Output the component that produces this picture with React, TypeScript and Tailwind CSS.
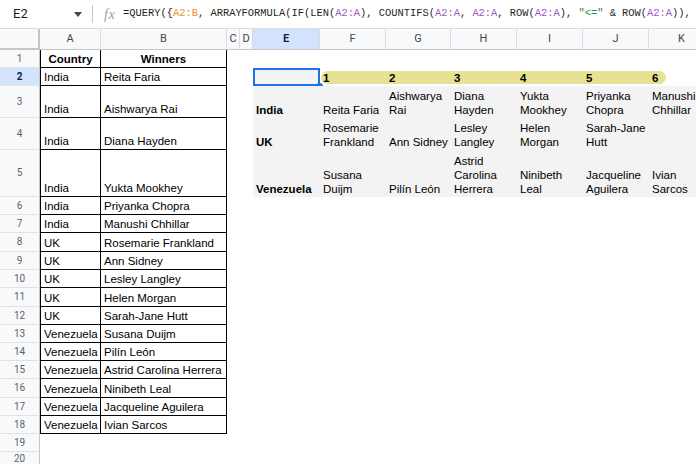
import React from 'react';

// Column widths of the sheet (row header first, then A..K)
const COLS = [
  { key: 'A', w: 'w-[61px]' },
  { key: 'B', w: 'w-[126px]' },
  { key: 'C', w: 'w-[13px]' },
  { key: 'D', w: 'w-[13px]' },
  { key: 'E', w: 'w-[67px]' },
  { key: 'F', w: 'w-[66px]' },
  { key: 'G', w: 'w-[65px]' },
  { key: 'H', w: 'w-[66px]' },
  { key: 'I', w: 'w-[66px]' },
  { key: 'J', w: 'w-[66px]' },
  { key: 'K', w: 'w-[66px]' },
];

const ROW_H = [
  'h-[18px]', 'h-[18px]', 'h-[32px]', 'h-[32px]', 'h-[47px]',
  'h-[18px]', 'h-[18px]', 'h-[19px]', 'h-[18px]', 'h-[18px]', 'h-[19px]', 'h-[18px]',
  'h-[18px]', 'h-[18px]', 'h-[18px]', 'h-[19px]', 'h-[18px]', 'h-[18px]',
  'h-[18px]', 'h-[14px]',
];

const TABLE: [string, string][] = [
  ['India', 'Reita Faria'],
  ['India', 'Aishwarya Rai'],
  ['India', 'Diana Hayden'],
  ['India', 'Yukta Mookhey'],
  ['India', 'Priyanka Chopra'],
  ['India', 'Manushi Chhillar'],
  ['UK', 'Rosemarie Frankland'],
  ['UK', 'Ann Sidney'],
  ['UK', 'Lesley Langley'],
  ['UK', 'Helen Morgan'],
  ['UK', 'Sarah-Jane Hutt'],
  ['Venezuela', 'Susana Duijm'],
  ['Venezuela', 'Pilín León'],
  ['Venezuela', 'Astrid Carolina Herrera'],
  ['Venezuela', 'Ninibeth Leal'],
  ['Venezuela', 'Jacqueline Aguilera'],
  ['Venezuela', 'Ivian Sarcos'],
];

// QUERY output, rows 3-5 (E..K), already wrapped the way the sheet wraps them
const RESULT: { country: string; cells: string[][] }[] = [
  {
    country: 'India',
    cells: [['Reita Faria'], ['Aishwarya', 'Rai'], ['Diana', 'Hayden'], ['Yukta', 'Mookhey'], ['Priyanka', 'Chopra'], ['Manushi', 'Chhillar']],
  },
  {
    country: 'UK',
    cells: [['Rosemarie', 'Frankland'], ['Ann Sidney'], ['Lesley', 'Langley'], ['Helen', 'Morgan'], ['Sarah-Jane', 'Hutt'], []],
  },
  {
    country: 'Venezuela',
    cells: [['Susana', 'Duijm'], ['Pilín León'], ['Astrid', 'Carolina', 'Herrera'], ['Ninibeth', 'Leal'], ['Jacqueline', 'Aguilera'], ['Ivian', 'Sarcos']],
  },
];

function Cell({
  w,
  lines = [],
  bold,
  center,
  className = '',
  children,
}: {
  w: string;
  lines?: string[];
  bold?: boolean;
  center?: boolean;
  className?: string;
  children?: React.ReactNode;
}) {
  return (
    <div
      className={`${w} h-full shrink-0 flex flex-col justify-end overflow-visible pb-[1px] px-[3px] leading-[14px] whitespace-nowrap ${
        bold ? 'font-bold' : ''
      } ${center ? 'items-center' : ''} ${className}`}
    >
      {lines.map((l, i) => (
        <div key={i}>{l}</div>
      ))}
      {children}
    </div>
  );
}

function RowHeader({ n, selected }: { n: number; selected?: boolean }) {
  return (
    <div
      className={`w-[40px] h-full shrink-0 flex items-center justify-center border-r border-b border-r-[#c4c7c5] border-b-[#e1e3e1] text-[10px] leading-none font-['Roboto',sans-serif] ${
        selected ? 'bg-[#d3e3fd] text-[#041e49] font-bold' : 'bg-[#f8f9fa] text-[#5f6368]'
      }`}
    >
      {n}
    </div>
  );
}

function FormulaBar() {
  const A = 'text-[#9a58c2]';
  return (
    <div className="h-[29px] flex items-center border-b border-[#dadce0] bg-white">
      <div className="w-[92px] flex items-center justify-between pl-[13px] pr-[10px] text-[13px] text-[#1f1f1f] font-['Roboto',sans-serif]">
        <span>E2</span>
        <svg width="8" height="5" viewBox="0 0 8 5">
          <path d="M0 0h8L4 5z" fill="#444746" />
        </svg>
      </div>
      <div className="w-px h-[18px] bg-[#c7c7c7]" />
      <span className="ml-[11px] text-[14px] italic text-[#9aa0a6] font-['Liberation_Serif',serif] tracking-[0.5px]">fx</span>
      <div className="ml-[8px] whitespace-nowrap text-[10.4px] text-[#1f1f1f] font-['Liberation_Mono',monospace]">
        =QUERY({'{'}
        <span className="text-[#e8912d]">A2:B</span>, ARRAYFORMULA(IF(LEN(<span className={A}>A2:A</span>), COUNTIFS(
        <span className={A}>A2:A</span>, <span className={A}>A2:A</span>, ROW(<span className={A}>A2:A</span>),{' '}
        <span className="text-[#1e8e3e]">"&lt;="</span> &amp; ROW(<span className={A}>A2:A</span>)),
      </div>
    </div>
  );
}

function ColumnHeaders() {
  return (
    <div className="h-[21px] flex bg-[#f8f9fa] font-['Roboto',sans-serif] text-[11px]">
      <div className="w-[40px] shrink-0 border-r-2 border-b-2 border-[#c4c7c5]" />
      {COLS.map((c) => (
        <div
          key={c.key}
          className={`${c.w} shrink-0 flex items-center justify-center border-r border-b border-r-[#dadce0] border-b-[#c4c7c5] ${
            c.key === 'E' ? 'bg-[#d3e3fd] text-[#041e49] font-semibold' : 'text-[#444746]'
          }`}
        >
          {c.key}
        </div>
      ))}
    </div>
  );
}

export default function App() {
  const tA = 'border-l border-r border-b border-black';
  const tB = 'border-r border-b border-black';
  const gray = 'bg-[#f3f3f3]';

  return (
    <div className="w-[696px] h-[464px] overflow-hidden bg-white font-['Liberation_Sans',Arial,sans-serif] text-[11.5px] text-black">
      <FormulaBar />
      <ColumnHeaders />

      {ROW_H.map((h, i) => {
        const n = i + 1;
        const t = n >= 2 && n <= 18 ? TABLE[n - 2] : null;
        const res = n >= 3 && n <= 5 ? RESULT[n - 3] : null;

        return (
          <div key={n} className={`${h} flex relative`}>
            <RowHeader n={n} selected={n === 2} />

            {n === 1 ? (
              <>
                <Cell w={COLS[0].w} lines={['Country']} bold center className={tA} />
                <Cell w={COLS[1].w} lines={['Winners']} bold center className={tB} />
              </>
            ) : t ? (
              <>
                <Cell w={COLS[0].w} lines={[t[0]]} className={tA} />
                <Cell w={COLS[1].w} lines={[t[1]]} className={tB} />
              </>
            ) : (
              <>
                <Cell w={COLS[0].w} />
                <Cell w={COLS[1].w} />
              </>
            )}

            <Cell w={COLS[2].w} />
            <Cell w={COLS[3].w} />

            {n === 2 ? (
              <>
                {/* highlighter stroke behind the headings 1..6 */}
                <div className="absolute left-[321px] top-[3px] w-[345px] h-[13px] rounded-full bg-[#e7e194]" />
                <Cell w={COLS[4].w} className={`relative ${gray}`}>
                  <div className="absolute inset-0 border-2 border-[#1a73e8]" />
                  <div className="absolute right-[-3px] bottom-[-4px] w-[7px] h-[7px] rounded-full bg-[#1a73e8]" />
                </Cell>
                {[1, 2, 3, 4, 5, 6].map((k, j) => (
                  <Cell key={k} w={COLS[5 + j].w} lines={[String(k)]} bold className="relative px-[2px]" />
                ))}
              </>
            ) : res ? (
              <>
                <Cell w={COLS[4].w} lines={[res.country]} bold className={gray} />
                {res.cells.map((lines, j) => (
                  <Cell key={j} w={COLS[5 + j].w} lines={lines} className={gray} />
                ))}
              </>
            ) : (
              COLS.slice(4).map((c) => <Cell key={c.key} w={c.w} />)
            )}
          </div>
        );
      })}
    </div>
  );
}
